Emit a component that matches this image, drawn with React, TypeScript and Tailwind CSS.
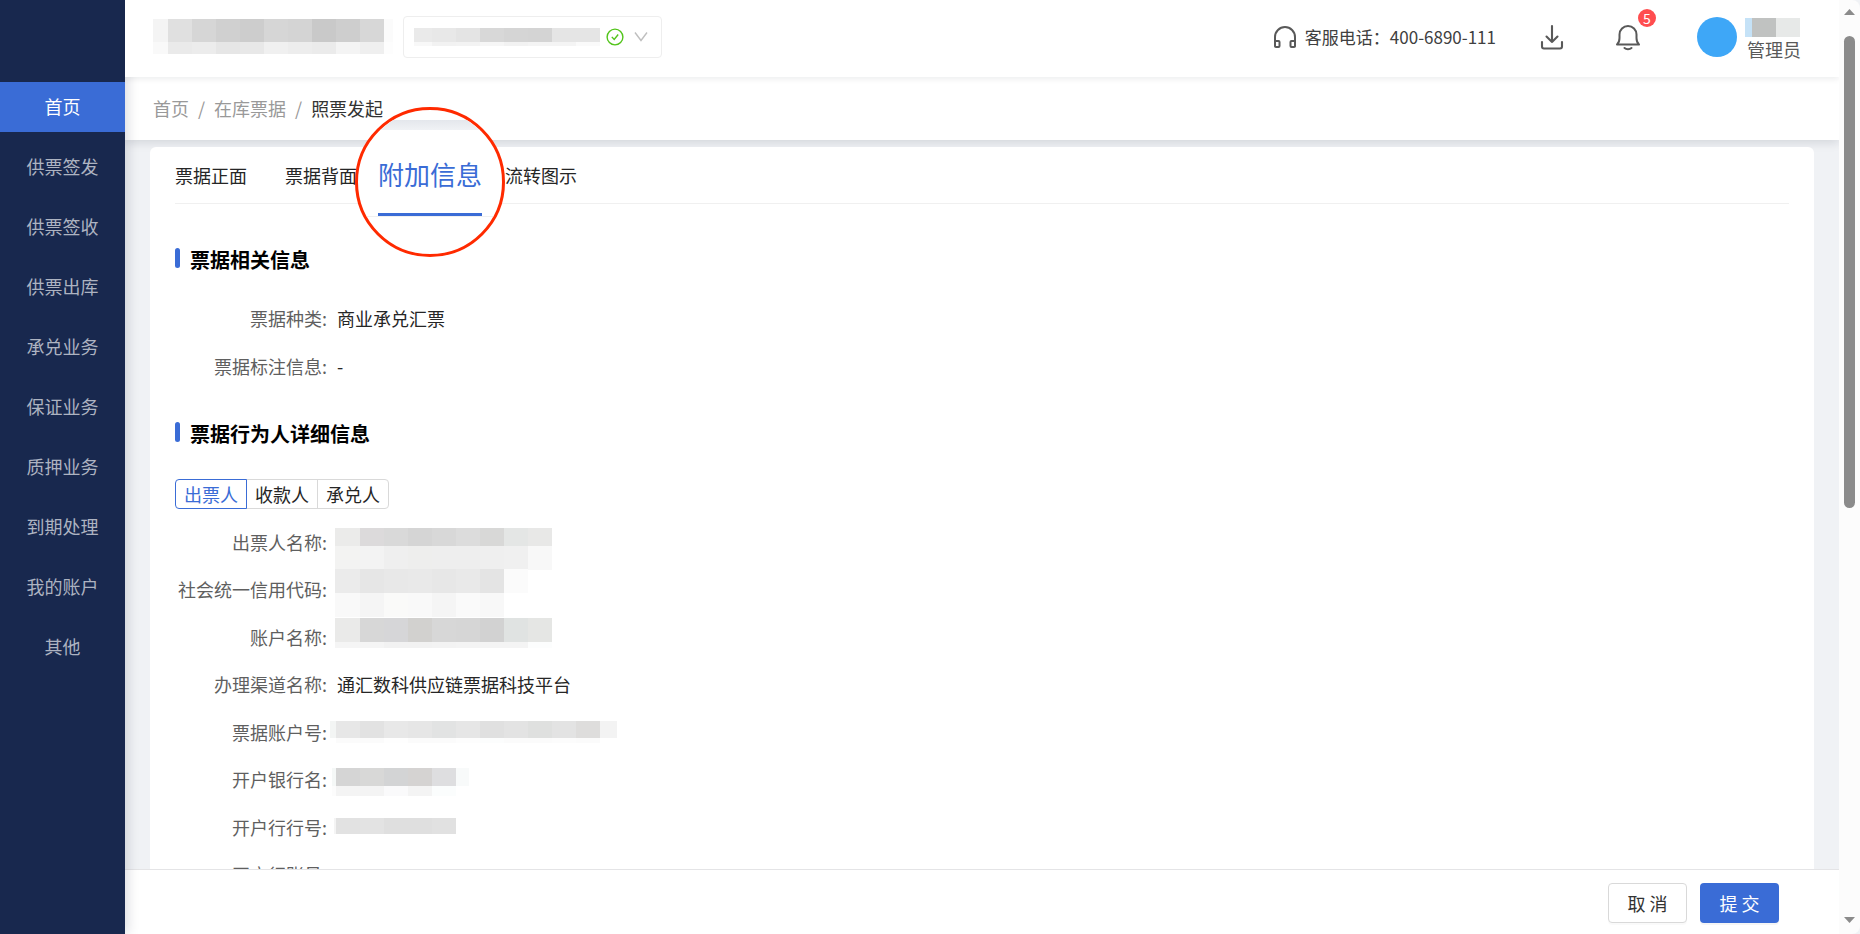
import React, { useState } from 'react';

interface MosaicRow {
  x: number;
  y: number;
  h: number;
  // first cell may be narrower than the 24px grid
  first: number;
  colors: string[];
  last?: number;
}

interface MosaicProps {
  width: number;
  height: number;
  rows: MosaicRow[];
}

// blocked-out text (names, account numbers)
const Mosaic: React.FC<MosaicProps> = ({ width, height, rows }) => (
  <svg width={width} height={height} className="shrink-0 overflow-visible" shapeRendering="crispEdges" aria-hidden="true">
    {rows.map((row, r) =>
      row.colors.map((color, i) => (
        <rect
          key={`${r}-${i}`}
          x={i === 0 ? row.x : row.x + row.first + (i - 1) * 24}
          y={row.y}
          width={i === 0 ? row.first : i === row.colors.length - 1 && row.last ? row.last : 24}
          height={row.h}
          fill={color}
        />
      ))
    )}
  </svg>
);

const menuItems = ['首页', '供票签发', '供票签收', '供票出库', '承兑业务', '保证业务', '质押业务', '到期处理', '我的账户', '其他'];

const companyMosaic: MosaicRow[] = [
  { x: 0, y: 0, h: 23, first: 15, last: 9, colors: ['#f4f4f4', '#e0e0e0', '#d6d6d6', '#d0d0d0', '#cdcdcd', '#d6d6d6', '#d4d4d4', '#c9c9c9', '#cecece', '#d7d7d7', '#fbfbfb'] },
  { x: 0, y: 23, h: 12, first: 15, last: 9, colors: ['#f9f9f9', '#eaeaea', '#ececec', '#e6e6e6', '#e8e8e8', '#f0f0f0', '#ededed', '#ebebeb', '#f4f4f4', '#efefef', '#fdfdfd'] },
];

const accountMosaic: MosaicRow[] = [
  { x: 0, y: 0, h: 14, first: 18, colors: ['#eaeaea', '#e8e8e8', '#e4e4e4', '#d8d8d8', '#d5d5d5', '#d4d4d4', '#e5e5e5', '#e5e5e5'] },
  { x: 0, y: 14, h: 4, first: 18, colors: ['#f8f8f8', '#f2f2f2', '#f3f3f3', '#f6f6f6', '#f2f2f2', '#f4f4f4', '#f4f4f4', '#fafafa'] },
];

const userMosaic: MosaicRow[] = [
  { x: 0, y: 5, h: 19, first: 7, colors: ['#c5e2f7', '#c0c2c1', '#e7e9e8'] },
];

interface Field {
  label: string;
  value?: string;
  mosaic?: MosaicRow[];
}

const billFields: Field[] = [
  { label: '票据种类', value: '商业承兑汇票' },
  { label: '票据标注信息', value: '-' },
];

const partyFields: Field[] = [
  {
    label: '出票人名称',
    mosaic: [
      { x: -2, y: 10, h: 18, first: 25, colors: ['#ebebea', '#dcdadb', '#d9d9d9', '#d5d5d5', '#d8d8d8', '#dcdcdc', '#d8d8d7', '#e4e6e5', '#e8e8e7'] },
      { x: -2, y: 28, h: 24, first: 25, colors: ['#f3f3f2', '#f3f3f3', '#efefef', '#eeeeed', '#eeeeee', '#eeeeee', '#efefef', '#f0f0f0', '#f8f8f8'] },
    ],
  },
  {
    label: '社会统一信用代码',
    mosaic: [
      { x: -2, y: 4, h: 24, first: 25, colors: ['#ebebeb', '#e6e6e6', '#e8e8e8', '#e9e9e9', '#e7e7e7', '#e9e9e9', '#e4e4e4', '#fbfbfb'] },
      { x: -2, y: 28, h: 24, first: 25, colors: ['#f9f9f9', '#f5f5f5', '#fafaf9', '#f9f9f9', '#f5f5f5', '#fafafa', '#f8f8f8'] },
    ],
  },
  {
    label: '账户名称',
    mosaic: [
      { x: -2, y: 5, h: 24, first: 25, colors: ['#eaeae9', '#d7d7d7', '#d6d6d8', '#d2d1cf', '#d7d7d7', '#d6d6d6', '#d2d2d2', '#e0e3e2', '#e5e6e4'] },
      { x: -2, y: 29, h: 6, first: 25, colors: ['#f5f5f5', '#f5f5f5', '#f2f2f2', '#f2f2f2', '#f3f3f3', '#f4f4f4', '#f4f4f4', '#f4f4f4', '#fcfdfd'] },
    ],
  },
  { label: '办理渠道名称', value: '通汇数科供应链票据科技平台' },
  {
    label: '票据账户号',
    mosaic: [
      { x: -7, y: 13, h: 17, first: 6, last: 17, colors: ['#f3f5f4', '#e7e7e7', '#e2e2e2', '#e8e8e8', '#e6e6e6', '#e2e3e3', '#e6e6e6', '#e0e0e0', '#e3e3e3', '#dfe0df', '#e3e3e3', '#dedddc', '#f3f3f3'] },
      { x: -7, y: 30, h: 5, first: 6, last: 17, colors: ['#ffffff', '#fbfbfb', '#fbfbfb', '#fefefe', '#fbfbfb', '#fbfbfb', '#fdfdfd', '#fcfdfd', '#fbfbfb', '#fbfbfb', '#fcfcfc', '#fbfbfb', '#ffffff'] },
    ],
  },
  {
    label: '开户银行名',
    mosaic: [
      { x: -5, y: 13, h: 18, first: 4, last: 13, colors: ['#f5f8f7', '#d5d5d5', '#d8d8d7', '#d3d4d5', '#d5d3d2', '#dedee0', '#f8fafa'] },
      { x: -5, y: 31, h: 10, first: 4, colors: ['#fcfcfc', '#f4f4f4', '#f4f4f4', '#fafafb', '#f4f4f4', '#fbfdfd'] },
    ],
  },
  {
    label: '开户行行号',
    mosaic: [{ x: -3, y: 15, h: 16, first: 2, colors: ['#f4f4f4', '#e2e2e2', '#e3e3e3', '#dfdfdf', '#dfdfdf', '#e1e1e1'] }],
  },
  { label: '开户行账号' },
];

const FieldRow: React.FC<{ field: Field }> = ({ field }) => (
  <div className="flex min-h-0 flex-1">
    <dt className="flex w-[162px] shrink-0 items-center justify-end whitespace-nowrap text-[#5f5f5f]">
      {field.label}
      <span className="mr-2.5">:</span>
    </dt>
    <dd className="flex items-center text-[#262626]">
      {field.mosaic ? <Mosaic width={280} height={48} rows={field.mosaic} /> : field.value}
    </dd>
  </div>
);

const SectionTitle: React.FC<{ children: React.ReactNode }> = ({ children }) => (
  <h2 className="flex h-6 items-start text-[20px] leading-6 font-bold text-black">
    <span className="mr-2.5 h-5 w-[5px] rounded-sm bg-[#3a6cd6]" />
    {children}
  </h2>
);

const App: React.FC = () => {
  const [party, setParty] = useState('出票人');

  return (
    <div className="flex h-screen overflow-hidden bg-[#f0f2f5] font-['Noto_Sans_CJK_SC','Liberation_Sans',sans-serif] text-[18px] leading-6">
      <nav className="relative z-20 flex w-[125px] shrink-0 flex-col gap-2.5 bg-[#18284e] pt-[82px] shadow-[2px_0_12px_rgba(0,21,41,0.16)]">
        {menuItems.map((item, index) => (
          <a
            key={item}
            href="#"
            className={
              index === 0
                ? 'flex h-[50px] items-center justify-center bg-[#3a6cd6] pb-0.5 text-white'
                : 'flex h-[50px] items-center justify-center pb-0.5 text-[#adb3c1]'
            }
          >
            {item}
          </a>
        ))}
      </nav>

      <div className="flex min-w-0 flex-1 flex-col">
        <header className="relative z-30 flex h-[77px] shrink-0 items-center bg-white pr-[38px] pb-1 pl-7 shadow-[0_2px_6px_rgba(0,21,41,0.08)]">
          <Mosaic width={250} height={36} rows={companyMosaic} />
          <div className="relative flex h-[42px] w-[259px] items-center rounded border border-[#eeeeee] pl-2.5">
            <Mosaic width={192} height={18} rows={accountMosaic} />
            <svg width="18" height="18" viewBox="0 0 18 18" fill="none" stroke="#52c41a" strokeWidth="1.4">
              <circle cx="9" cy="9" r="7.9" />
              <path d="M5.800 8.900l2.400 2.600 4-5" />
            </svg>
            <svg className="ml-2.5" width="14" height="12" viewBox="0 0 14 12" fill="none" stroke="#bfbfbf" strokeWidth="1.4">
              <path d="M1 1.500l6 8 6-8" />
            </svg>
            <select aria-label="选择企业" className="absolute inset-0 cursor-pointer appearance-none opacity-0">
              <option value="" />
            </select>
          </div>

          <div className="ml-auto flex items-center">
            <svg width="24" height="24" viewBox="0 0 24 24" fill="none" stroke="#595959" strokeWidth="2">
              <path d="M2 21.500V12a10 10 0 0 1 20 0v9.500" />
              <rect x="2" y="16" width="4.500" height="6" rx="1" />
              <rect x="17.500" y="16" width="4.500" height="6" rx="1" />
            </svg>
            <span className="mr-10 ml-2 text-[17px] whitespace-nowrap text-[#404040]">客服电话：400-6890-111</span>
            <button type="button" aria-label="下载" className="mr-11 flex w-8 justify-center">
              <svg width="24" height="26" viewBox="0 0 24 26" fill="none" stroke="#595959" strokeWidth="2.100" strokeLinecap="round" strokeLinejoin="round">
                <path d="M12 2v16M6.500 12.500l5.500 5.500 5.500-5.500" />
                <path d="M2 18v4.500a2 2 0 0 0 2 2h16a2 2 0 0 0 2-2V18" />
              </svg>
            </button>
            <button type="button" aria-label="消息" className="relative mr-[53px] flex w-8 justify-center">
              <svg width="26" height="28" viewBox="0 0 26 28" fill="none" stroke="#595959" strokeWidth="2" strokeLinecap="round" strokeLinejoin="round">
                <path d="M2 21.500c1.800-1.600 2.500-3.500 2.500-6.500v-3.500a8.500 8.500 0 0 1 17 0V15c0 3 .7 4.900 2.500 6.500z" />
                <path d="M9.500 25c1.800 1.500 5.200 1.500 7 0" />
              </svg>
              <span className="absolute -top-3.5 -right-3 h-[18px] w-[18px] rounded-full bg-[#ff4d4f] text-center text-[14px] leading-[18px] text-white">5</span>
            </button>
            <span className="mr-2 h-10 w-10 rounded-full bg-[#3ea7f7]" />
            <div className="flex w-14 flex-col items-end">
              <Mosaic width={56} height={24} rows={userMosaic} />
              <span className="text-[#595959]">管理员</span>
            </div>
          </div>
        </header>

        <div className="flex h-[63px] shrink-0 items-center gap-[9px] bg-white pb-0.5 pl-7 text-[#999999] shadow-[0_2px_10px_rgba(0,21,41,0.14)]">
          <a href="#">首页</a>
          <span>/</span>
          <a href="#">在库票据</a>
          <span>/</span>
          <span className="text-[#333333]">照票发起</span>
        </div>

        <main className="min-h-0 flex-1 pt-[7px] pr-[25px] pl-[25px]">
          <div className="min-h-full rounded-md bg-white px-[25px]">
            <div role="tablist" className="flex h-[57px] items-center gap-[38px] border-b border-[#f0f0f0] text-[#262626]">
              <button type="button" role="tab" className="whitespace-nowrap">票据正面</button>
              <button type="button" role="tab" className="whitespace-nowrap">票据背面</button>
              <div className="relative z-10 h-6 w-[72px] shrink-0">
                {/* magnified active tab */}
                <div className="absolute -top-14 -left-10 flex h-[150px] w-[150px] flex-col items-center overflow-hidden rounded-full border-[3px] border-[#ff2a00] bg-white">
                  <div className="h-2.5 w-full shrink-0" />
                  <div className="h-2.5 w-full shrink-0 bg-linear-to-b from-[#e4e7ec] to-[#f0f2f5]" />
                  <div className="flex w-full justify-center border-b border-[#f0f0f0]">
                    <button type="button" role="tab" aria-selected="true" className="h-[86px] border-b-[3px] border-[#3a6cd6] pt-1 text-[26px] whitespace-nowrap text-[#3a6cd6]">
                      附加信息
                    </button>
                  </div>
                </div>
              </div>
              <button type="button" role="tab" className="whitespace-nowrap">流转图示</button>
            </div>

            <section className="pt-11">
              <SectionTitle>票据相关信息</SectionTitle>
              <dl className="mt-[22px] flex h-24 flex-col">
                {billFields.map(field => (
                  <FieldRow key={field.label} field={field} />
                ))}
              </dl>
            </section>

            <section className="pt-8">
              <SectionTitle>票据行为人详细信息</SectionTitle>
              <div role="radiogroup" className="mt-[33px] flex">
                {['出票人', '收款人', '承兑人'].map(name => (
                  <label
                    key={name}
                    className={
                      party === name
                        ? 'relative -mr-px flex h-[30px] w-[72px] cursor-pointer items-center justify-center border border-[#3a6cd6] text-[#3a6cd6] z-10 first:rounded-l last:rounded-r'
                        : 'relative -mr-px flex h-[30px] w-[72px] cursor-pointer items-center justify-center border border-[#d9d9d9] text-[#262626] first:rounded-l last:rounded-r'
                    }
                  >
                    <input type="radio" name="party" className="sr-only" checked={party === name} onChange={() => setParty(name)} />
                    {name}
                  </label>
                ))}
              </div>
              <dl className="mt-[9px] flex h-[380px] flex-col">
                {partyFields.map(field => (
                  <FieldRow key={field.label} field={field} />
                ))}
              </dl>
            </section>
          </div>
        </main>

        <footer className="relative z-10 flex h-[65px] shrink-0 items-center justify-end gap-[13px] border-t border-[#e4e4e6] bg-white pt-0.5 pr-[60px]">
          <button type="button" className="h-10 w-[79px] rounded border border-[#d9d9d9] bg-white text-[#333333] shadow-[0_2px_0_rgba(0,0,0,0.02)]">
            取 消
          </button>
          <button type="button" className="h-10 w-[79px] rounded bg-[#3a6cd6] text-white shadow-[0_2px_0_rgba(0,0,0,0.04)]">
            提 交
          </button>
        </footer>
      </div>

      {/* scrollbar */}
      <div className="relative z-40 flex w-[21px] shrink-0 flex-col items-center rounded-r-lg bg-[#fcfcfc] pt-[9px] pb-[11px]">
        <svg width="11" height="6" viewBox="0 0 11 6" fill="#8b8b8b">
          <path d="M5.500 0L11 6H0z" />
        </svg>
        <div className="mt-[21px] h-[472px] w-[11px] rounded-full bg-[#8b8b8b]" />
        <svg className="mt-auto" width="11" height="6" viewBox="0 0 11 6" fill="#8b8b8b">
          <path d="M5.500 6L0 0h11z" />
        </svg>
      </div>
    </div>
  );
};

export default App;
